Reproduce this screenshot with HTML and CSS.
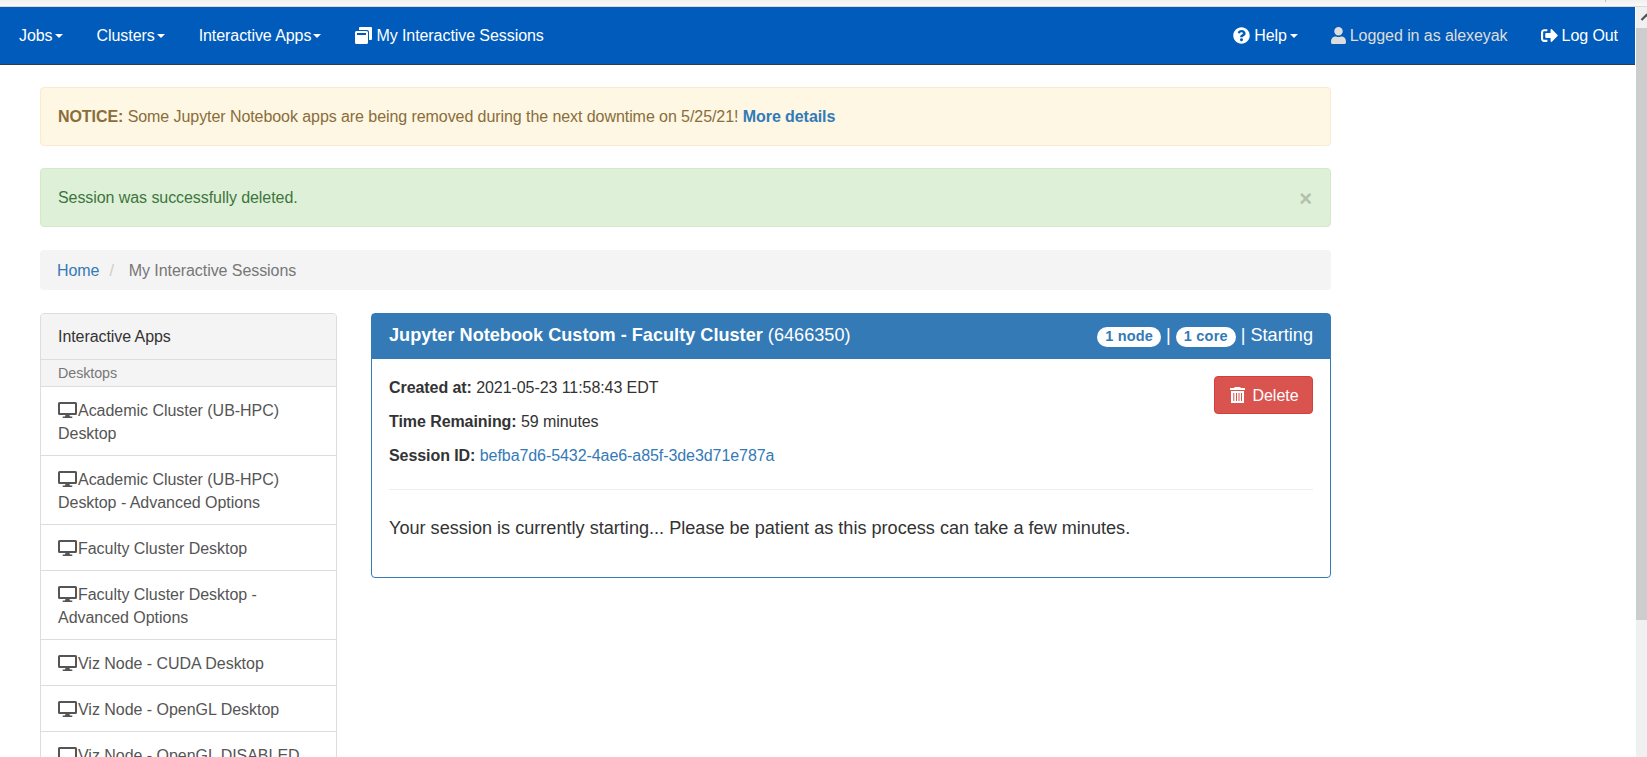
FILE: index.html
```html
<!DOCTYPE html>
<html lang="en">
<head>
<meta charset="utf-8">
<title>My Interactive Sessions</title>
<link rel="stylesheet" href="styles.css">
</head>
<body>
<svg class="defs" width="0" height="0">
  <symbol id="desktop" viewBox="0 0 19 16"><path fill="currentColor" fill-rule="evenodd" d="M1.500 0h16Q19 0 19 1.500v10Q19 13 17.500 13H11.500l.5 1.500h2.300V16H4.700V14.500H7L7.500 13H1.500Q0 13 0 11.500v-10Q0 0 1.500 0zM2 2v9h15V2z"/></symbol>
</svg>
<div class="chrome-edge"><i></i></div>
<div class="viewport">
  <div class="page">
    <nav class="navbar">
      <div class="nav-group">
        <a>Jobs<b class="caret"></b></a>
        <a>Clusters<b class="caret"></b></a>
        <a>Interactive Apps<b class="caret"></b></a>
        <a><svg class="icon icon-windows" width="17" height="17" viewBox="0 0 17 17"><path fill="#fff" d="M5 0h11q1 0 1 1v11q0 1-1 1h-2V5q0-2-2-2H4V1q0-1 1-1z"/><path fill="#fff" fill-rule="evenodd" d="M1.500 4H11.500Q13 4 13 5.500V15.500Q13 17 11.500 17H1.500Q0 17 0 15.500V5.500Q0 4 1.500 4zM2 6v2h9V6z"/></svg>My Interactive Sessions</a>
      </div>
      <div class="nav-group nav-right">
        <a><svg class="icon" width="17" height="17" viewBox="0 0 512 512"><path fill="currentColor" d="M504 256c0 137-111 248-248 248S8 393 8 256 119 8 256 8s248 111 248 248zM262.700 90c-54.500 0-89.300 23-116.500 63.800-3.500 5.300-2.400 12.400 2.700 16.300l34.700 26.300c5.200 3.900 12.600 3 16.700-2.100 17.900-22.700 30.100-35.800 57.300-35.800 20.400 0 45.700 13.100 45.700 33 0 15-12.400 22.700-32.500 34C247.100 238.500 216 254.900 216 296v4c0 6.600 5.400 12 12 12h56c6.600 0 12-5.400 12-12v-1.300c0-28.500 83.200-29.600 83.200-106.700 0-58-60.200-102-116.500-102zM256 338c-25.400 0-46 20.600-46 46s20.600 46 46 46 46-20.600 46-46-20.600-46-46-46z"/></svg>Help<b class="caret"></b></a>
        <span class="nav-text"><svg class="icon" width="15" height="17" viewBox="0 0 448 512"><path fill="currentColor" d="M224 256c70.700 0 128-57.300 128-128S294.700 0 224 0 96 57.300 96 128s57.300 128 128 128zm89.600 32h-16.700c-22.200 10.200-46.900 16-72.900 16s-50.600-5.800-72.900-16h-16.700C60.200 288 0 348.200 0 422.400V464c0 26.500 21.500 48 48 48h352c26.500 0 48-21.500 48-48v-41.600c0-74.200-60.200-134.400-134.400-134.400z"/></svg>Logged in as alexeyak</span>
        <a><svg class="icon" width="17" height="17" viewBox="0 0 512 512"><path fill="currentColor" d="M497 273L329 441c-15 15-41 4.500-41-17v-96H152c-13.300 0-24-10.700-24-24v-96c0-13.300 10.700-24 24-24h136V88c0-21.400 25.900-32 41-17l168 168c9.300 9.400 9.300 24.600 0 34zM192 436v-40c0-6.600-5.400-12-12-12H96c-17.700 0-32-14.300-32-32V160c0-17.700 14.300-32 32-32h84c6.600 0 12-5.400 12-12V76c0-6.600-5.400-12-12-12H96c-53 0-96 43-96 96v192c0 53 43 96 96 96h84c6.600 0 12-5.400 12-12z"/></svg>Log Out</a>
      </div>
    </nav>
    <main class="container">
      <div class="alert alert-warning"><span><strong>NOTICE:</strong> Some Jupyter Notebook apps are being removed during the next downtime on 5/25/21! <a class="link"><strong>More details</strong></a></span></div>
      <div class="alert alert-success"><span>Session was successfully deleted.</span><span class="close">×</span></div>
      <div class="breadcrumb"><a class="link">Home</a><span class="slash">/</span><span>My Interactive Sessions</span></div>
      <div class="columns">
        <aside class="sidebar">
          <div class="side-title">Interactive Apps</div>
          <div class="side-sub">Desktops</div>
          <a class="side-item"><svg class="monitor"><use href="#desktop"/></svg>Academic Cluster (UB-HPC)<br>Desktop</a>
          <a class="side-item"><svg class="monitor"><use href="#desktop"/></svg>Academic Cluster (UB-HPC)<br>Desktop - Advanced Options</a>
          <a class="side-item"><svg class="monitor"><use href="#desktop"/></svg>Faculty Cluster Desktop</a>
          <a class="side-item"><svg class="monitor"><use href="#desktop"/></svg>Faculty Cluster Desktop -<br>Advanced Options</a>
          <a class="side-item"><svg class="monitor"><use href="#desktop"/></svg>Viz Node - CUDA Desktop</a>
          <a class="side-item"><svg class="monitor"><use href="#desktop"/></svg>Viz Node - OpenGL Desktop</a>
          <a class="side-item"><svg class="monitor"><use href="#desktop"/></svg>Viz Node - OpenGL DISABLED</a>
        </aside>
        <section class="panel">
          <header class="panel-heading">
            <span><strong>Jupyter Notebook Custom - Faculty Cluster</strong> (6466350)</span>
            <span class="status"><span class="badge">1 node</span><span>|</span><span class="badge">1 core</span><span>|</span><span>Starting</span></span>
          </header>
          <div class="panel-body">
            <div class="details">
              <div>
                <p><strong>Created at:</strong> 2021-05-23 11:58:43 EDT</p>
                <p><strong>Time Remaining:</strong> 59 minutes</p>
                <p><strong>Session ID:</strong> <a class="link">befba7d6-5432-4ae6-a85f-3de3d71e787a</a></p>
              </div>
              <button class="btn-delete"><svg width="15" height="16" viewBox="0 0 15 16"><path fill="#fff" fill-rule="evenodd" d="M4.500 1V0h6v1H15v2H0V1zM1 4h13v12H1zM3.300 6v8h1V6zM6 6v8h1V6zM8.500 6v8h1V6zM11 6v8h1V6z"/></svg>Delete</button>
            </div>
            <p class="lead">Your session is currently starting... Please be patient as this process can take a few minutes.</p>
          </div>
        </section>
      </div>
    </main>
  </div>
  <div class="scrollbar"><div class="scroll-button"><svg width="11" height="21" viewBox="0 0 11 21"><path fill="none" stroke="#505050" stroke-width="2.200" d="M5.500 13L10.500 8l5 5"/></svg></div><div class="scroll-thumb"></div></div>
</div>
</body>
</html>
```

FILE: styles.css
```css
* { box-sizing: border-box; }
body {
  margin: 0;
  height: 757px;
  overflow: hidden;
  display: flex;
  flex-direction: column;
  background: #fff;
  color: #333;
  font: 16px/23px "Liberation Sans", Arial, sans-serif;
  letter-spacing: -0.07px;
}
p { margin: 0; }
.defs { position: absolute; }
.link { color: #337ab7; }

.chrome-edge {
  flex: none;
  height: 7px;
  background: linear-gradient(#f0f0f0, #f9f9f9);
  border-bottom: 1px solid #d8d8d8;
  display: flex;
  justify-content: flex-end;
}
.chrome-edge i { width: 1px; height: 2px; margin-right: 41px; background: #bbb; }
.viewport { flex: 1; min-height: 0; display: flex; }
.page { flex: 1; min-width: 0; overflow: hidden; }

.navbar {
  height: 58px;
  margin-right: 1px;
  display: flex;
  justify-content: space-between;
  padding: 0 17px 0 19px;
  background: #005bbb;
  border-bottom: 1px solid #2f3b48;
  color: #fff;
}
.nav-group { display: flex; align-items: center; gap: 34px; padding-bottom: 1px; }
.nav-group > * { display: flex; align-items: center; white-space: nowrap; }
.nav-text { color: #ddd; }
.icon { margin-right: 4px; }
.icon-windows { margin-left: 0; }
.caret {
  margin: 2px 0 0 2px;
  border: 4px solid transparent;
  border-top-color: #fff;
  border-bottom: 0;
}
.nav-right { gap: 33px; }
.nav-right .caret { margin-left: 3px; }

.container { width: 1331px; padding: 22px 0 0 40px; }
.alert {
  height: 59px;
  margin-bottom: 22px;
  padding: 0 18px 0 17px;
  display: flex;
  align-items: center;
  justify-content: space-between;
  border: 1px solid;
  border-radius: 4px;
}
.alert-warning { color: #8a6d3b; background: #fdf7e3; border-color: #faebcc; }
.alert-success { color: #3c763d; background: #dff0d8; border-color: #d6e9c6; }
.close { margin-top: 2px; color: #b2c0ad; font-size: 22px; font-weight: bold; }
.breadcrumb {
  height: 40px;
  margin: 23px 0;
  padding: 0 17px;
  display: flex;
  align-items: center;
  background: #f4f4f4;
  border-radius: 4px;
  color: #777;
}
.slash { color: #ccc; margin: 0 15px 0 10px; }

.columns { display: flex; gap: 34px; align-items: flex-start; }
.sidebar {
  width: 297px;
  flex: none;
  border: 1px solid #ddd;
  border-radius: 4px;
  color: #555;
}
.side-title { padding: 11px 17px 11px; height: 45px; background: #f4f4f4; color: #333; border-radius: 4px 4px 0 0; }
.side-sub {
  height: 27px;
  padding: 0 17px;
  border-top: 1px solid #ddd;
  background: #f4f4f4;
  color: #777;
  font-size: 14.300px;
  line-height: 27px;
}
.side-item { display: block; border-top: 1px solid #ddd; padding: 12px 17px 10px; white-space: nowrap; letter-spacing: -0.03px; }
.monitor { width: 19px; height: 16px; margin-right: 1px; vertical-align: -2px; }

.panel { flex: 1; height: 265px; border: 1px solid #337ab7; border-radius: 4px; }
.panel-heading {
  height: 45px;
  padding: 0 17px 3px;
  display: flex;
  align-items: center;
  justify-content: space-between;
  background: #337ab7;
  color: #fff;
  font-size: 18.100px;
  letter-spacing: 0.02px;
}
.status { display: flex; align-items: center; gap: 5px; }
.badge {
  height: 20px;
  margin-top: 3px;
  padding: 0 8px;
  border-radius: 10px;
  background: #fff;
  color: #337ab7;
  font-size: 14.500px;
  font-weight: bold;
  line-height: 19px;
  letter-spacing: 0.2px;
}
.panel-body { padding: 17px; }
.details { display: flex; justify-content: space-between; align-items: flex-start; height: 114px; border-bottom: 1px solid #eee; }
.details p { margin-bottom: 11px; }
.btn-delete {
  width: 99px;
  height: 38px;
  display: flex;
  align-items: center;
  justify-content: center;
  gap: 7px;
  padding: 0 0 0 2px;
  border: 1px solid #d43f3a;
  border-radius: 4px;
  background: #d9534f;
  color: #fff;
  font: inherit;
}
.lead { margin-top: 27px; font-size: 18.120px; letter-spacing: 0; }

.scrollbar { width: 11px; flex: none; background: #f0f0f0; overflow: hidden; }
.scroll-button { height: 21px; }
.scroll-thumb { height: 592px; background: #cdcdcd; }
```
